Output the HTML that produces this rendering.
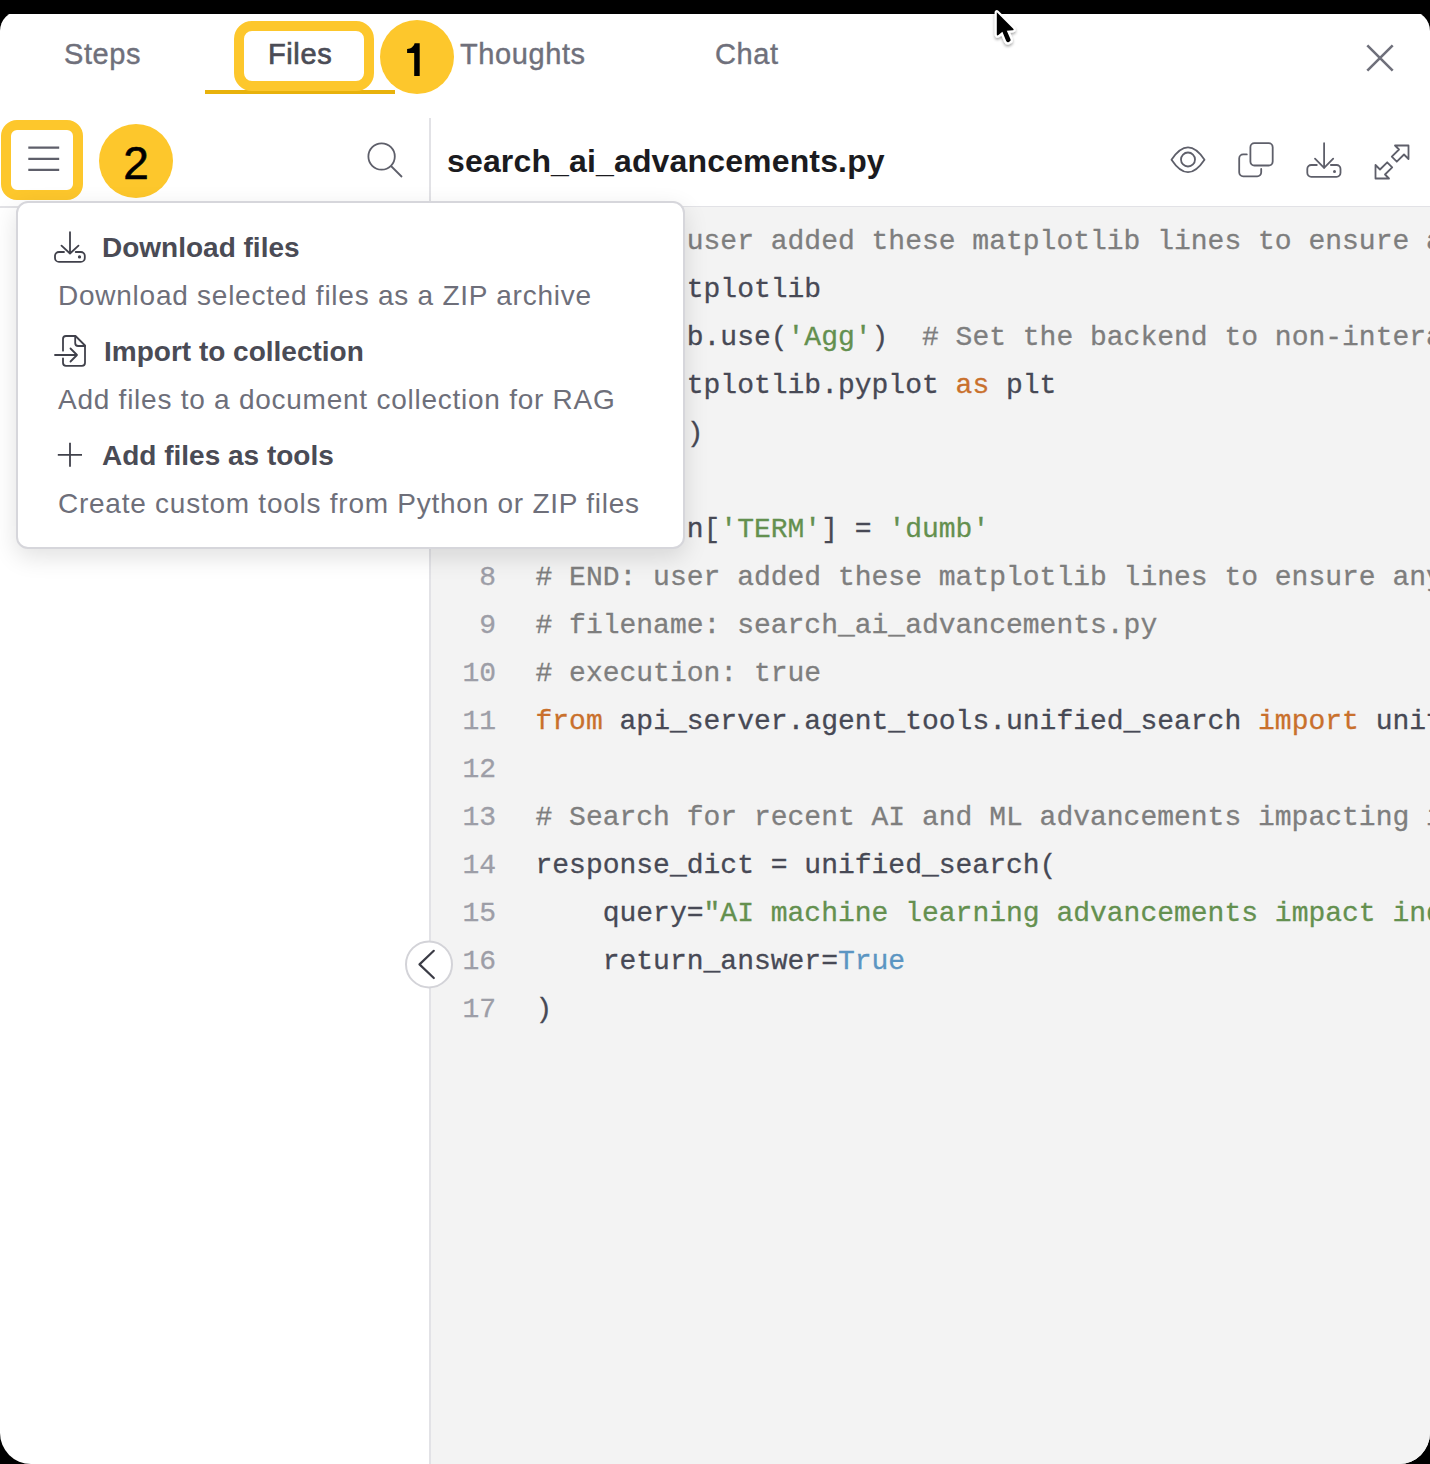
<!DOCTYPE html>
<html><head><meta charset="utf-8">
<style>
*{margin:0;padding:0;box-sizing:border-box}
html,body{width:1430px;height:1464px;overflow:hidden;background:#000}
body{position:relative;font-family:"Liberation Sans",sans-serif}
.abs{position:absolute}
#panel{position:absolute;left:0;top:11px;width:1430px;height:1453px;background:#fff;border-radius:20px 20px 31px 31px;overflow:hidden}
#topbar{position:absolute;left:0;top:0;width:1430px;height:14px;background:#000}
.tab{position:absolute;top:37px;font-size:29px;letter-spacing:0.6px;line-height:34px;color:#6f707b;-webkit-text-stroke:0.4px #6f707b;white-space:nowrap}
#code{position:absolute;left:431px;top:207px;width:999px;height:1257px;background:#f3f3f3;border-bottom-right-radius:31px}
.ln{position:absolute;font-family:"Liberation Mono",monospace;font-size:28px;line-height:48px;white-space:pre;-webkit-text-stroke-width:0.3px}
.num{color:#9d9ea7;text-align:right;width:80px;left:416px}
.src{left:535.5px;color:#474955}
.c{color:#7e7e7e}.k{color:#c9702c}.s{color:#64904f}.b{color:#5b95c2}
.digit{font-size:46px;-webkit-text-stroke:0.6px #000;line-height:78px;text-align:center;color:#000;font-family:"Liberation Sans",sans-serif}
.title{left:447px;top:139px;font-size:32px;line-height:44px;font-weight:bold;letter-spacing:0.15px;color:#1b1b20;white-space:nowrap}
#dd{left:16px;top:201px;width:669px;height:348px;background:#fff;border:2px solid #d6d6db;border-radius:12px;box-shadow:0 8px 24px rgba(0,0,0,0.12)}
.ddt{position:absolute;left:84px;font-size:28px;line-height:34px;font-weight:bold;color:#4a4b55;white-space:nowrap}
.ddd{position:absolute;left:40px;font-size:28px;line-height:34px;letter-spacing:0.75px;color:#6e6f7a;white-space:nowrap}
</style></head>
<body>
<div id="panel"></div>
<div id="topbar"></div>

<!-- tabs -->
<div class="tab" style="left:64px">Steps</div>
<div class="tab" style="left:268px;color:#4b4c56;-webkit-text-stroke:0.7px #4b4c56">Files</div>
<div class="tab" style="left:460px">Thoughts</div>
<div class="tab" style="left:715px">Chat</div>
<div class="abs" style="left:205px;top:90px;width:190px;height:4px;background:#e8b20c"></div>

<!-- close -->
<svg class="abs" style="left:1360px;top:38px" width="40" height="40" viewBox="0 0 40 40"><path d="M7.3 7.3L32.7 32.7M32.7 7.3L7.3 32.7" stroke="#6f707b" stroke-width="2.6" fill="none"/></svg>

<!-- code area -->
<div id="code"></div>
<div class="abs" style="left:430px;top:206px;width:1000px;height:1px;background:#e2e2e6"></div>
<div class="abs" style="left:0;top:206px;width:430px;height:2px;background:#e2e2e6"></div>
<div class="abs" style="left:429px;top:118px;width:2px;height:1346px;background:#e2e2e6"></div>


<!-- annotation 1 -->
<div class="abs" style="left:234px;top:21px;width:140px;height:70px;border:10px solid #fdc72c;border-radius:18px"></div>
<div class="abs" style="left:380px;top:20px;width:74px;height:74px;border-radius:50%;background:#fdc72c"></div>
<svg class="abs" style="left:0;top:0" width="460" height="100"><path d="M419.7 43.2H414.6C413.8 46.3 411.2 48.7 407.1 48.9V53.1H414.2V76H419.7Z" fill="#000"/></svg>

<!-- row 2 -->
<div class="abs" style="left:1px;top:120px;width:82px;height:80px;border:10px solid #fdc72c;border-radius:16px"></div>
<svg class="abs" style="left:0;top:120px" width="90" height="80"><path d="M28.3 27.7H59.2M28.3 38.9H59.2M28.3 49.9H59.2" stroke="#5e5f6a" stroke-width="2.2" fill="none"/></svg>
<div class="abs" style="left:99px;top:124px;width:74px;height:74px;border-radius:50%;background:#fdc72c"></div>
<div class="abs digit" style="left:99px;top:124px;width:74px;height:74px;">2</div>
<svg class="abs" style="left:360px;top:135px" width="50" height="50"><circle cx="21.6" cy="21.5" r="13.2" stroke="#5e5f6a" stroke-width="1.8" fill="none"/><path d="M31 31L42 42" stroke="#5e5f6a" stroke-width="1.8"/></svg>

<div class="abs title">search_ai_advancements.py</div>

<svg class="abs" style="left:1160px;top:130px" width="270" height="60" fill="none" stroke="#5e5f6a" stroke-width="1.8" stroke-linejoin="round" stroke-linecap="round">
<path d="M11.5 29.7C17 21.5 22 17.4 28 17.4S39 21.5 44.5 29.7C39 37.9 34 42.2 28 42.2S17 37.9 11.5 29.7Z"/>
<circle cx="28" cy="29.5" r="7"/>
<rect x="90.4" y="13.2" width="22.3" height="22.3" rx="4"/>
<path d="M86.8 24.4H83.2A4 4 0 0 0 79.2 28.4V42.3A4 4 0 0 0 83.2 46.3H97.2A4 4 0 0 0 101.2 42.3V39"/>
<path d="M164.1 13.2V38M155 28.6L164.1 37.8L173.2 28.6"/>
<path d="M156.8 35H151.3A4 4 0 0 0 147.3 39V42.8A4 4 0 0 0 151.3 46.8H176.5A4 4 0 0 0 180.5 42.8V39A4 4 0 0 0 176.5 35H170.9"/>
</svg>
<svg class="abs" style="left:1392px;top:162px;overflow:visible" width="1" height="1" fill="none" stroke="#5e5f6a" stroke-width="1.8" stroke-linejoin="round">
<path d="M16.5 -16.5L16.5 -3L12 -7.5L4.8 -0.3L-0.2 -5.3L7 -12.5L3 -16.5Z"/>
<path d="M-16.5 16.5L-16.5 3L-12 7.5L-4.8 0.3L0.2 5.3L-7 12.5L-3 16.5Z"/>
</svg>
<div class="abs" style="left:1333px;top:169.8px;width:3px;height:3px;border-radius:50%;background:#5e5f6a"></div>


<!-- code lines -->
<div class="ln num" style="top:218px">1<br>2<br>3<br>4<br>5<br>6<br>7<br>8<br>9<br>10<br>11<br>12<br>13<br>14<br>15<br>16<br>17</div>
<div class="ln src" style="top:218px"><span class="c">         user added these matplotlib lines to ensure any output is saved</span>
<span>         tplotlib</span>
<span>         b.use(<span class="s">'Agg'</span>)  <span class="c"># Set the backend to non-interactive</span></span>
<span>         tplotlib.pyplot <span class="k">as</span> plt</span>
<span>         )</span>
<span></span>
<span>         n[<span class="s">'TERM'</span>] = <span class="s">'dumb'</span></span>
<span class="c"># END: user added these matplotlib lines to ensure any output is saved</span>
<span class="c"># filename: search_ai_advancements.py</span>
<span class="c"># execution: true</span>
<span class="k">from</span> api_server.agent_tools.unified_search <span class="k">import</span> unified_search

<span class="c"># Search for recent AI and ML advancements impacting industries</span>
response_dict = unified_search(
    query=<span class="s">"AI machine learning advancements impact industries 2024"</span>,
    return_answer=<span class="b">True</span>
)</div>



<!-- collapse button -->
<svg class="abs" style="left:403px;top:939px" width="52" height="52"><circle cx="26" cy="25.4" r="23" fill="#fff" stroke="#d3d3d8" stroke-width="2"/><path d="M30.8 11.8L16.5 25.4L30.8 39" stroke="#3b3c46" stroke-width="2.2" fill="none" stroke-linecap="round" stroke-linejoin="round"/></svg>

<!-- dropdown -->
<div class="abs" id="dd">
  <div class="ddt" style="top:28px">Download files</div>
  <div class="ddd" style="top:76px">Download selected files as a ZIP archive</div>
  <div class="ddt" style="top:132px;left:86px">Import to collection</div>
  <div class="ddd" style="top:180px">Add files to a document collection for RAG</div>
  <div class="ddt" style="top:236px">Add files as tools</div>
  <div class="ddd" style="top:284px">Create custom tools from Python or ZIP files</div>
</div>


<!-- dropdown icons overlay (absolute coords) -->
<svg class="abs" style="left:0;top:0" width="1430" height="1464" fill="none" stroke="#40414b" stroke-width="1.8" stroke-linecap="round" stroke-linejoin="round">
  <path d="M70 232.2V252.5M61.5 245.7L70 253.5L78.5 245.7"/>
  <path d="M64 252H59A4 4 0 0 0 55 256V257.9A4 4 0 0 0 59 261.9H80.8A4 4 0 0 0 84.8 257.9V256A4 4 0 0 0 80.8 252H75.7"/>
  <circle cx="79.5" cy="256.9" r="0.7" fill="#40414b"/>
  <path d="M63 350.7V339A3 3 0 0 1 66 336H75.5L85 345.5V362.8A3 3 0 0 1 82 365.8H66A3 3 0 0 1 63 362.8V358.3"/>
  <path d="M75.2 336.5V343A3 3 0 0 0 78.2 346H85"/>
  <path d="M55 355H77M70.5 348.5L77 355L70.5 361.5"/>
  <path d="M57.8 454.9H82M70 442.8V466.7" stroke-linecap="butt"/>
</svg>

<!-- cursor -->
<svg class="abs" style="left:0;top:0;overflow:visible" width="1430" height="60">
  <defs><filter id="sh" x="-50%" y="-50%" width="200%" height="200%"><feGaussianBlur in="SourceAlpha" stdDeviation="1.6"/><feOffset dx="0" dy="1.5"/><feComponentTransfer><feFuncA type="linear" slope="0.35"/></feComponentTransfer><feMerge><feMergeNode/><feMergeNode in="SourceGraphic"/></feMerge></filter></defs>
  <g filter="url(#sh)">
  <path d="M996.8 12.3L996.8 34.2Q996.8 36.3 998.4 35L1002.4 31.8L1006.2 41Q1007 42.7 1008.8 41.9L1009.6 41.5Q1011.2 40.8 1010.5 39.2L1006.8 30.7L1012.3 30.3Q1014.6 30 1013 28.4Z" fill="#fff" stroke="#fff" stroke-width="4.4" stroke-linejoin="round"/>
  <path d="M996.8 12.3L996.8 34.2Q996.8 36.3 998.4 35L1002.4 31.8L1006.2 41Q1007 42.7 1008.8 41.9L1009.6 41.5Q1011.2 40.8 1010.5 39.2L1006.8 30.7L1012.3 30.3Q1014.6 30 1013 28.4Z" fill="#000"/>
  </g>
</svg>
</body></html>
